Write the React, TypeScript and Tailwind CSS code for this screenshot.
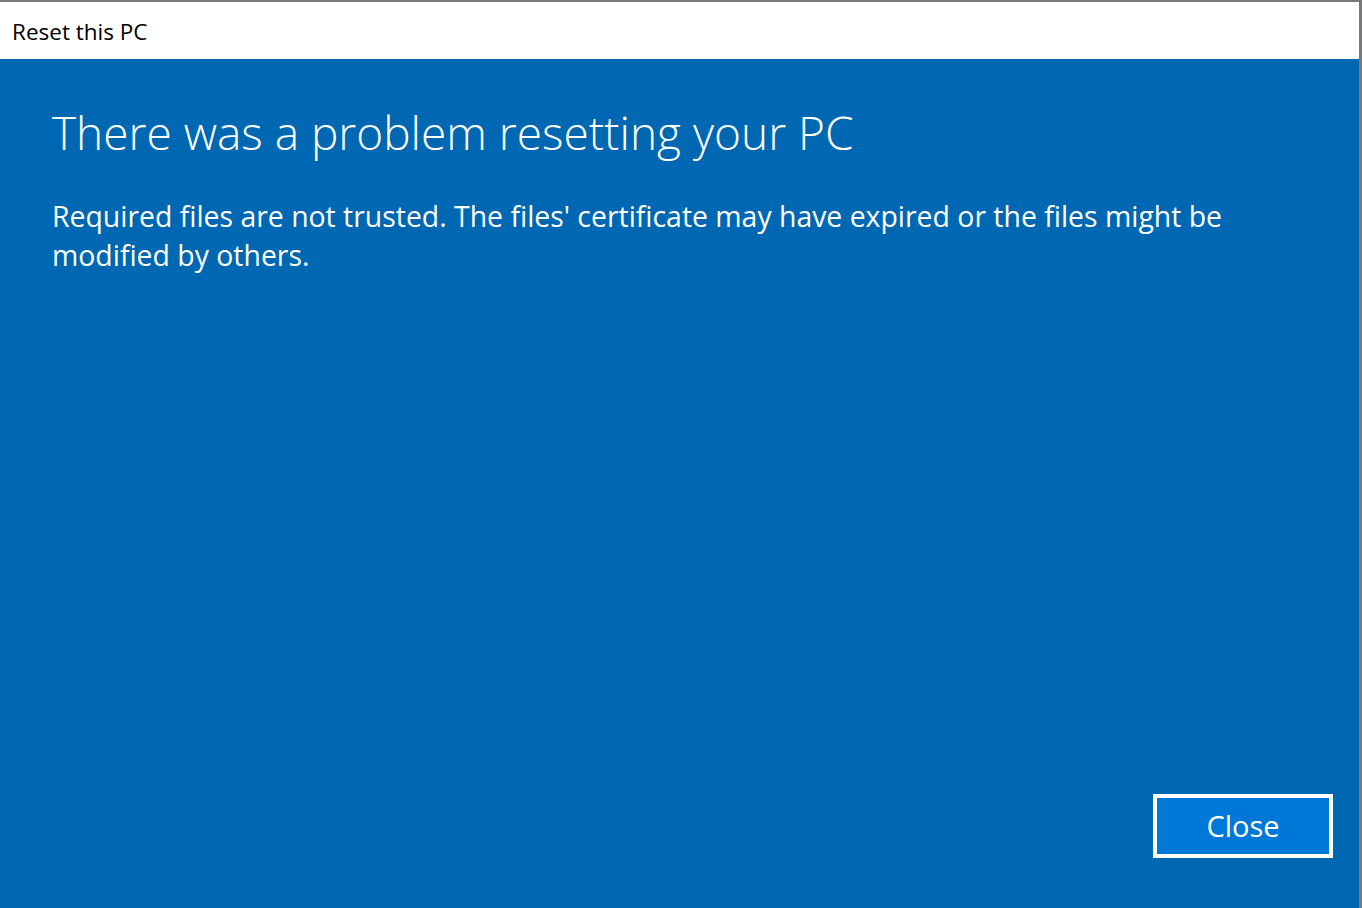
export default function App() {
  const font = { fontFamily: '"Open Sans", "Noto Sans", sans-serif' };

  return (
    <div
      className="flex h-[908px] w-full flex-col border-t-2 border-r-[3px] border-[#7a7a7a] bg-white"
      style={font}
    >
      <div className="flex h-[57px] items-center pl-[12px] pt-[3px] text-[22.5px] text-black">
        Reset this PC
      </div>

      <div className="flex flex-1 flex-col bg-[#0067b3] text-white">
        <div className="flex-1 pl-[52px] pt-[41px]">
          <h1 className="text-[46px] font-light leading-[64px]">
            There was a problem resetting your PC
          </h1>
          <p className="mt-[33px] text-[28.4px] leading-[39px]">
            Required files are not trusted. The files' certificate may have expired or the files might be
            <br />
            modified by others.
          </p>
        </div>

        <div className="flex justify-end pb-[50px] pr-[26px]">
          <button className="h-[64px] w-[180px] border-4 border-white bg-[#0078d7] text-[29px] text-white">
            Close
          </button>
        </div>
      </div>
    </div>
  );
}
